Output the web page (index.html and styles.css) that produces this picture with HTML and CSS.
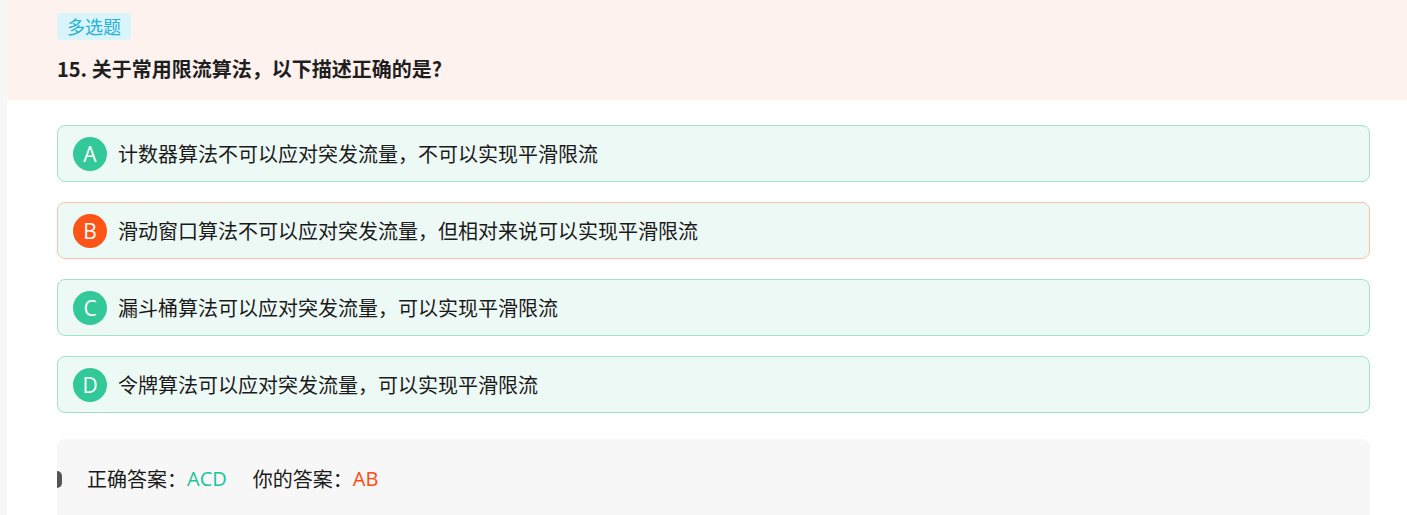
FILE: index.html
```html
<!DOCTYPE html>
<html lang="zh-CN">
<head>
<meta charset="utf-8">
<title>多选题</title>
<link rel="stylesheet" href="styles.css">
</head>
<body>
<div class="page">
  <div class="header">
    <span class="tag">多选题</span>
    <h1 class="title">15. 关于常用限流算法，以下描述正确的是?</h1>
  </div>
  <div class="options">
    <div class="option">
      <span class="letter">A</span>
      <span class="text">计数器算法不可以应对突发流量，不可以实现平滑限流</span>
    </div>
    <div class="option wrong">
      <span class="letter">B</span>
      <span class="text">滑动窗口算法不可以应对突发流量，但相对来说可以实现平滑限流</span>
    </div>
    <div class="option">
      <span class="letter">C</span>
      <span class="text">漏斗桶算法可以应对突发流量，可以实现平滑限流</span>
    </div>
    <div class="option">
      <span class="letter">D</span>
      <span class="text">令牌算法可以应对突发流量，可以实现平滑限流</span>
    </div>
    <div class="answer">
      <span class="marker"></span>
      <span class="label">正确答案：</span><span class="correct">ACD</span>
      <span class="label mine">你的答案：</span><span class="yours">AB</span>
    </div>
  </div>
</div>
</body>
</html>
```
FILE: styles.css
```css
html, body {
  margin: 0;
  padding: 0;
  background: #f7f7f7;
  font-family: "Noto Sans CJK SC", "Noto Sans", sans-serif;
  color: #1a1a1a;
}
.page {
  margin-left: 7px;
  background: #ffffff;
  min-height: 515px;
}
.header {
  background: #fdf2ee;
  height: 100px;
  box-sizing: border-box;
  padding: 13px 50px 0;
}
.tag {
  display: inline-block;
  height: 27px;
  line-height: 27px;
  padding: 0 10px;
  border-radius: 4px;
  background: #d9f4fb;
  color: #26b1d6;
  font-size: 18px;
}
.title {
  margin: 15px 0 0;
  font-size: 20px;
  line-height: 28px;
  font-weight: bold;
  color: #1f1f1f;
}
.options {
  padding: 25px 37px 0 50px;
}
.option {
  display: flex;
  align-items: center;
  height: 57px;
  box-sizing: border-box;
  padding: 0 15px;
  margin-bottom: 20px;
  border: 1px solid #a1e2c9;
  border-radius: 8px;
  background: #edf9f5;
}
.option.wrong {
  border-color: #fbc1a9;
}
.letter {
  flex: none;
  width: 34px;
  height: 34px;
  border-radius: 50%;
  background: #33c898;
  color: #ffffff;
  font-size: 21px;
  line-height: 34px;
  text-align: center;
  margin-right: 11px;
  font-family: "Open Sans", "Noto Sans", sans-serif;
}
.wrong .letter {
  background: #fe5417;
}
.text {
  font-size: 20px;
  line-height: 28px;
  color: #1a1a1a;
}
.answer {
  display: flex;
  align-items: center;
  margin-top: 26px;
  height: 90px;
  box-sizing: border-box;
  padding: 26px 0 36px;
  background: #f7f7f7;
  border-radius: 8px 8px 0 0;
  font-size: 20px;
  line-height: 28px;
}
.marker {
  flex: none;
  width: 5px;
  height: 17px;
  background: #555555;
  border-radius: 0 5px 5px 0;
  margin-right: 25px;
}
.label {
  color: #1a1a1a;
}
.mine {
  margin-left: 26px;
}
.correct, .yours {
  font-family: "Open Sans", "Noto Sans", sans-serif;
}
.correct {
  color: #1cc49b;
}
.yours {
  color: #fe4c10;
}
```
